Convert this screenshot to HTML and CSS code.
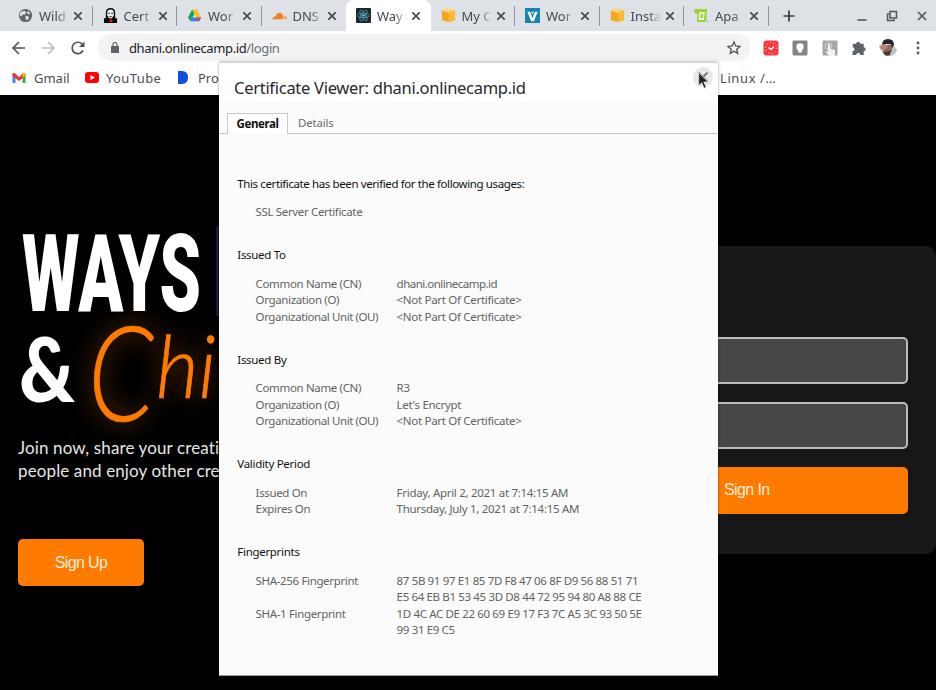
FILE: index.html
```html
<!DOCTYPE html>
<html lang="en">
<head>
<meta charset="utf-8">
<title>Certificate Viewer</title>
<link rel="stylesheet" href="styles.css">
</head>
<body>
<div class="window">
  <div class="tabstrip">
    <div class="tab"><svg class="fav" viewBox="0 0 16 16"><circle cx="8" cy="8" r="7" fill="#5f6368"/><path d="M3 4l4-1 2 2-2 2H5l-1 2-2-1V6zM10 3l3 2-1 2-2-1zM8 8l3 1 1 1-2 3-2-1z" fill="#dee1e6"/></svg><span class="label">Wild</span><i class="x"></i></div>
    <div class="tab"><svg class="fav" viewBox="0 0 16 16"><path d="M3 5Q3 0 8 0t5 5v6h2v5H1v-5h2z" fill="#080808"/><path d="M4.500 5Q4.500 1.500 8 1.500T11.500 5v3l-2 3h-3l-2-3z" fill="#eee"/><path d="M5.500 5h2v1.500h-2zM8.700 5h2v1.500h-2zM6.500 8.500h3v1h-3z" fill="#555"/><path d="M7 12h3v3H7z" fill="#e71927"/></svg><span class="label">Cert</span><i class="x"></i></div>
    <div class="tab"><svg class="fav" viewBox="0 0 16 16"><path d="M5.500 1.500L1 10l2.500 4L8 6z" fill="#10a45b"/><path d="M5.500 1.500h5L15 10h-5z" fill="#fbc116"/><path d="M5.500 10H15l-2 4H3.500z" fill="#3d7dec"/><path d="M10.500 10H15l-2 4z" fill="#e84435"/></svg><span class="label">Wor</span><i class="x"></i></div>
    <div class="tab"><svg class="fav" viewBox="0 0 16 16"><path d="M0 12q0-2 2-2 0-2 2-1 1-4 4-4 3 0 4 4l-1 3z" fill="#f48120"/><path d="M12 12l1-4q3 0 3 4z" fill="#faad4a"/></svg><span class="label">DNS</span><i class="x"></i></div>
    <div class="tab active"><svg class="fav" viewBox="0 0 16 16"><rect width="16" height="16" rx="1" fill="#20232a"/><g fill="none" stroke="#49a7bd" stroke-width=".8"><ellipse cx="8" cy="8" rx="6.500" ry="2.500"/><ellipse cx="8" cy="8" rx="6.500" ry="2.500" transform="rotate(60 8 8)"/><ellipse cx="8" cy="8" rx="6.500" ry="2.500" transform="rotate(120 8 8)"/></g><circle cx="8" cy="8" r="1.300" fill="#61dafb"/></svg><span class="label">Way</span><i class="x"></i></div>
    <div class="tab"><svg class="fav" viewBox="0 0 16 16"><path d="M1 3l7-2 7 2v10l-7 2-7-2z" fill="#f2a51f"/><path d="M1 3l7-2 7 2-7 2z" fill="#ffd76e"/><path d="M8 5l7-2v10l-7 2z" fill="#fbb934"/></svg><span class="label">My C</span><i class="x"></i></div>
    <div class="tab"><svg class="fav" viewBox="0 0 16 16"><path d="M0 0h16v16H0z" fill="#1285b5"/><path d="M2.500 4h3L8 11l2.500-7h3L9.500 14h-3z" fill="#fff"/><path d="M6.500 4h3L8 7z" fill="#cde9f4"/></svg><span class="label">Wor</span><i class="x"></i></div>
    <div class="tab"><svg class="fav" viewBox="0 0 16 16"><path d="M1 3l7-2 7 2v10l-7 2-7-2z" fill="#f2a51f"/><path d="M1 3l7-2 7 2-7 2z" fill="#ffd76e"/><path d="M8 5l7-2v10l-7 2z" fill="#fbb934"/></svg><span class="label">Insta</span><i class="x"></i></div>
    <div class="tab"><svg class="fav" viewBox="0 0 16 16"><path d="M0 1h14l-1 12q-.5 2-2 2H3l1-9H1z" fill="#9bd13c"/><path d="M6.500 5h4l-.7 7H6z" fill="none" stroke="#f2ffdc" stroke-width="1.500"/><path d="M14 14h1v1h-1z" fill="#777"/></svg><span class="label">Apa</span><i class="x"></i></div>
    <svg class="plus" viewBox="0 0 12 12"><path d="M6 .5v11M.5 6h11" stroke="#35383b" stroke-width="1.700"/></svg>
    <div class="controls">
      <svg viewBox="0 0 12 12"><path d="M1.500 10h9" stroke="#53565a" stroke-width="1.600"/></svg>
      <svg viewBox="0 0 12 12"><path d="M4 1.500h6.500V8H4zM3 4H1.500v6.500H8V9" fill="none" stroke="#53565a" stroke-width="1.500"/></svg>
      <svg viewBox="0 0 12 12"><path d="M2 2l8 8M10 2l-8 8" stroke="#53565a" stroke-width="1.700"/></svg>
    </div>
  </div>
  <div class="toolbar">
    <svg class="nav" viewBox="0 0 16 16"><path d="M14 8H2.500M8 2L2 8l6 6" fill="none" stroke="#505357" stroke-width="1.600"/></svg>
    <svg class="nav" viewBox="0 0 16 16"><path d="M2 8h11.500M8 2l6 6-6 6" fill="none" stroke="#b9bbbe" stroke-width="1.600"/></svg>
    <svg class="nav" viewBox="0 0 16 16"><path d="M13 10.500A5.700 5.700 0 1 1 12 4l1.500 1.500" fill="none" stroke="#505357" stroke-width="1.700"/><path d="M14.500 1.500V7H9z" fill="#505357"/></svg>
    <div class="omnibox">
      <svg class="lock" viewBox="0 0 8 11"><path d="M0 4h8v7H0z" fill="#5f6368"/><path d="M2 4.500V2.500a2 2 0 0 1 4 0v2" fill="none" stroke="#5f6368" stroke-width="1.200"/></svg>
      <span class="url">dhani.onlinecamp.id<em>/login</em></span>
      <svg class="star" viewBox="0 0 16 16"><path d="M8 2l1.700 4 4.300.4-3.300 2.800 1 4.200L8 11.200l-3.700 2.200 1-4.200L2 6.400 6.300 6z" fill="none" stroke="#505357" stroke-width="1.300"/></svg>
    </div>
    <div class="ext">
      <svg viewBox="0 0 16 16"><rect x=".5" y=".5" width="15" height="15" rx="3" fill="#fb363c"/><circle cx="8" cy="8" r="5.500" fill="none" stroke="#ffc1ae" stroke-width="1.200" stroke-dasharray="1 2.450"/><path d="M5.500 7.500L8 9.500l3-3" fill="none" stroke="#fff" stroke-width="1.500"/></svg>
      <svg viewBox="0 0 16 16"><rect x=".5" y=".5" width="15" height="15" rx="1" fill="#81868b"/><circle cx="8" cy="7" r="3.700" fill="#fff"/><path d="M6.200 9h3.600v3.500H6.200z" fill="#fff"/></svg>
      <svg viewBox="0 0 16 16"><rect x=".5" y=".5" width="15" height="15" rx="1" fill="#a6a6a6"/><circle cx="6.500" cy="6" r="3.300" fill="none" stroke="#d5d5d5"/><path d="M6 4h2v5l5 1v4l-1 2H7l-4-5 3 1z" fill="#f5f5f5"/></svg>
      <svg viewBox="0 0 16 16"><path d="M2 3.700h3.200a2 2 0 1 1 4 0h3.500v3.600a2 2 0 1 1 0 4V15H9.300a2 2 0 1 0-4 0H1.500v-3.700a2 2 0 1 0 0-4z" fill="#5f6368"/></svg>
      <svg class="avatar" viewBox="0 0 20 18"><path d="M3 8q0 9 8 9 6 0 8-6L14 4z" fill="#b8c3c8"/><path d="M5 6h9v6l-4 4-5-5z" fill="#90695a"/><path d="M4 6q0-6 6-6t6 6L14 9 13 5H8L5 7z" fill="#242426"/><path d="M1 7l5-2 4 2-2 3-5 1z" fill="#ba8978"/><path d="M5 12q4 2 8-1l-1 5q-4 2-6-1z" fill="#473834"/></svg>
      <svg class="dots" viewBox="0 0 16 16"><g fill="#55585c"><circle cx="8" cy="3" r="1.400"/><circle cx="8" cy="8" r="1.400"/><circle cx="8" cy="13" r="1.400"/></g></svg>
    </div>
  </div>
  <div class="bookmarks">
    <svg class="gmail" viewBox="0 0 13 10"><path d="M0 1l3 2v7H0z" fill="#4285f4"/><path d="M10 3l3-2v9h-3z" fill="#34a853"/><path d="M0 1q1-2 3-.3L6.500 4 10 .7Q12 -1 13 1v2L6.500 8 0 3z" fill="#df3b30"/><path d="M10 .7Q12 -1 13 1v2l-3 2z" fill="#fbbc04"/></svg>
    <span class="bm-gmail">Gmail</span>
    <svg class="yt" viewBox="0 0 14 11"><rect width="14" height="11" rx="3" fill="#f00"/><path d="M5.500 3v5L10 5.500z" fill="#fff"/></svg>
    <span class="bm-yt">YouTube</span>
    <svg class="dd" viewBox="0 0 10 13"><path d="M0 0h4q6 0 6 6.500T4 13H0z" fill="#0d4fd8"/></svg>
    <span>Pro</span>
    <span class="linux">Linux /…</span>
  </div>
  <main class="site">
    <section class="hero">
      <svg class="art" viewBox="0 0 219 216">
        <defs><filter id="glow" x="-50%" y="-50%" width="200%" height="200%"><feGaussianBlur stdDeviation="12"/></filter></defs>
        <path d="M217.500 10v90" stroke="#25215b" stroke-width="2"/>
        <text class="ways" x="22" y="95" textLength="179" lengthAdjust="spacingAndGlyphs">WAYS</text>
        <text class="amp" x="19" y="186" textLength="56" lengthAdjust="spacingAndGlyphs">&amp;</text>
        <g class="halo" filter="url(#glow)"><text class="big-c" x="88" y="205" textLength="66" lengthAdjust="spacingAndGlyphs">C</text><text class="hi" x="156" y="182" textLength="60" lengthAdjust="spacingAndGlyphs">hi</text></g>
        <g class="script"><text class="big-c" x="88" y="205" textLength="66" lengthAdjust="spacingAndGlyphs">C</text><text class="hi" x="156" y="182" textLength="60" lengthAdjust="spacingAndGlyphs">hi</text></g>
      </svg>
      <p>Join now, share your creations with<br>people and enjoy other creations</p>
      <button class="btn signup">Sign Up</button>
    </section>
    <section class="login">
      <div class="field"></div>
      <div class="field"></div>
      <button class="btn signin">Sign In</button>
    </section>
  </main>
  <div class="dialog">
    <header><h1>Certificate Viewer: dhani.onlinecamp.id</h1></header>
    <span class="close"><svg viewBox="0 0 20 20"><path d="M5.500 5.500l9 9M14.500 5.500l-9 9" stroke="#5f6368" stroke-width="1.700"/></svg></span>
    <svg class="cursor" viewBox="0 0 11 17"><path d="M.7.7v13l3-3 2.500 5.500 2-1-2.400-5.200h4.300z" fill="#222" stroke="#eee" stroke-width=".7"/></svg>
    <nav><b>General</b><span>Details</span></nav>
    <div class="content">
      <h2 class="verified">This certificate has been verified for the following usages:</h2>
      <dl><dt>SSL Server Certificate</dt><dd></dd></dl>
      <h2>Issued To</h2>
      <dl><dt>Common Name (CN)</dt><dd class="host">dhani.onlinecamp.id</dd><dt>Organization (O)</dt><dd>&lt;Not Part Of Certificate&gt;</dd><dt class="unit">Organizational Unit (OU)</dt><dd>&lt;Not Part Of Certificate&gt;</dd></dl>
      <h2>Issued By</h2>
      <dl><dt>Common Name (CN)</dt><dd>R3</dd><dt>Organization (O)</dt><dd>Let's Encrypt</dd><dt class="unit">Organizational Unit (OU)</dt><dd>&lt;Not Part Of Certificate&gt;</dd></dl>
      <h2>Validity Period</h2>
      <dl><dt>Issued On</dt><dd>Friday, April 2, 2021 at 7:14:15 AM</dd><dt>Expires On</dt><dd>Thursday, July 1, 2021 at 7:14:15 AM</dd></dl>
      <h2>Fingerprints</h2>
      <dl class="prints"><dt>SHA-256 Fingerprint</dt><dd>87 5B 91 97 E1 85 7D F8 47 06 8F D9 56 88 51 71<br>E5 64 EB B1 53 45 3D D8 44 72 95 94 80 A8 88 CE</dd><dt>SHA-1 Fingerprint</dt><dd>1D 4C AC DE 22 60 69 E9 17 F3 7C A5 3C 93 50 5E<br>99 31 E9 C5</dd></dl>
    </div>
  </div>
</div>
</body>
</html>
```
FILE: styles.css
```css
* { box-sizing: border-box; }
body { margin: 0; font-family: "Noto Sans", sans-serif; }
.window { position: relative; width: 936px; height: 690px; overflow: hidden; background: #000; display: flex; flex-direction: column; }
svg { display: block; flex: none; }

.tabstrip { height: 31px; flex: none; background: #dee1e6; display: flex; align-items: stretch; padding-left: 8px; }
.tab { width: 84.5px; flex: none; display: flex; align-items: center; padding-left: 10px; border-right: 1px solid transparent; border-image: linear-gradient(transparent 7px, #929598 7px, #929598 25px, transparent 25px) 1; }
.tab:nth-child(4) { border-image: none; }
.tab.active { background: #fff; border-image: none; border-radius: 8px 8px 0 0; }
.fav { width: 15px; height: 15px; }
.label { width: 29px; margin-left: 6px; overflow: hidden; white-space: nowrap; font-size: 13px; line-height: 20px; color: #45484c; -webkit-mask-image: linear-gradient(90deg, #000 60%, rgba(0,0,0,.1)); mask-image: linear-gradient(90deg, #000 60%, rgba(0,0,0,.1)); }
.x { width: 8px; height: 8px; margin-left: 6px; background: linear-gradient(45deg, transparent 43%, #4b4e52 44%, #4b4e52 56%, transparent 57%), linear-gradient(-45deg, transparent 43%, #4b4e52 44%, #4b4e52 56%, transparent 57%); }
.plus { width: 12px; height: 12px; align-self: center; margin-left: 14px; }
.controls { display: flex; gap: 18px; align-items: center; margin-left: 61px; }
.controls svg { width: 12px; height: 12px; }

.toolbar { height: 33px; flex: none; background: #fff; display: flex; align-items: center; padding-left: 11px; }
.nav { width: 16px; height: 16px; margin-right: 13.3px; }
.omnibox { width: 653px; height: 27px; flex: none; border-radius: 14px; background: #f1f3f4; display: flex; align-items: center; margin-left: -1px; padding: 0 9px 0 13px; }
.lock { width: 8px; height: 11px; }
.url { flex: 1; margin-left: 10px; font-size: 13px; letter-spacing: -.38px; color: #202124; }
.url em { font-style: normal; color: #6a6e73; }
.star { width: 16px; height: 16px; }
.ext { display: flex; align-items: center; gap: 13.4px; margin-left: 12px; }
.ext svg { width: 16px; height: 16px; }
.ext .avatar { width: 20px; height: 18px; margin: 0 -2px; }

.bookmarks { height: 31px; flex: none; background: #fff; display: flex; align-items: center; padding: 0 0 4px 12px; font-size: 13px; color: #4b4e52; white-space: nowrap; }
.gmail { width: 14px; height: 10px; }
.bm-gmail { width: 38px; margin: 0 13px 0 8px; }
.yt { width: 14px; height: 11px; }
.bm-yt { width: 57px; margin: 0 15px 0 7px; letter-spacing: .4px; }
.dd { width: 10px; height: 13px; margin-right: 10px; }
.linux { position: absolute; left: 720px; letter-spacing: .6px; }

.site { flex: 1; background: #000; display: flex; align-items: flex-start; color: #fff; }
.hero { width: 436px; padding-top: 121px; }
.art { width: 219px; height: 216px; overflow: visible; }
.ways { font: 900 108px Roboto, sans-serif; fill: #fff; }
.amp { font: 900 90px Lato, sans-serif; fill: #fff; }
.big-c { font: italic 300 132px Lato, sans-serif; }
.hi { font: italic 300 86px Lato, sans-serif; }
.script, .halo { fill: #ff7b00; }
.script { stroke: #ff7b00; stroke-width: .7px; }
.halo { opacity: .6; }
.hero p { margin: 4px 0 0 18px; font: 400 17px/23px Lato, sans-serif; letter-spacing: .12px; color: #e6e6e6; white-space: nowrap; }
.btn { display: block; border: 0; padding: 0; background: #ff7b00; border-radius: 5px; color: #ffeedd; font: 16px "Liberation Sans", sans-serif; letter-spacing: -.6px; }
.signup { width: 126px; height: 47px; margin: 57px 0 0 18px; }
.login { width: 500px; height: 308px; margin-top: 150.500px; padding: 91px 28px 0 86px; border-radius: 10px; background: #171717; display: flex; flex-direction: column; }
.field { height: 47px; margin-bottom: 18px; border: 2px solid #bcbcbc; border-radius: 5px; background: #474747; flex: none; }
.signin { width: 386px; height: 47px; flex: none; align-self: flex-end; text-align: left; text-indent: 202px; }

.dialog { position: absolute; left: 219px; top: 62px; width: 499px; height: 614px; background: #fbfbfb; border-top: 1px solid #d3d4d7; border-bottom: 1px solid #999; box-shadow: 0 0 3px rgba(0,0,0,.35); }
.dialog header { height: 39px; background: #fff; padding: 12px 15px 0; }
h1 { margin: 0; font-size: 16.500px; line-height: 26px; font-weight: 400; letter-spacing: -.28px; color: #27292d; white-space: nowrap; }
.close { position: absolute; left: 474px; top: 4px; width: 20px; height: 20px; border-radius: 50%; background: #e8e8e8; }
.cursor { position: absolute; left: 479px; top: 9px; width: 11px; height: 17px; }
.dialog nav { height: 32px; display: flex; align-items: flex-end; border-bottom: 1px solid #c8c8c8; padding-left: 8px; font-size: 11.500px; line-height: 20px; letter-spacing: -.2px; color: #6b6b6b; }
.dialog nav b { height: 21px; width: 61px; margin-bottom: -1px; text-align: center; background: #fff; border: 1px solid #c8c8c8; border-bottom: 0; color: #111; letter-spacing: -.4px; }
.dialog nav span { margin-left: 10px; }
.content { padding: 41.500px 18.300px 0; font-size: 12px; line-height: 16.500px; letter-spacing: -.3px; }
h2 { margin: 0 0 12px; font-size: 11.500px; line-height: 16.500px; font-weight: 400; color: #111; }
.verified { letter-spacing: -.39px; }
dl { display: grid; grid-template-columns: 141px 1fr; margin: 0 0 26.500px 18.300px; font-size: 11.500px; color: #636363; white-space: nowrap; }
dt, dd { margin: 0; }
dt { letter-spacing: -.35px; }
.unit { letter-spacing: -.42px; }
.host { letter-spacing: -.52px; }
.prints dd { letter-spacing: -.36px; }
```
